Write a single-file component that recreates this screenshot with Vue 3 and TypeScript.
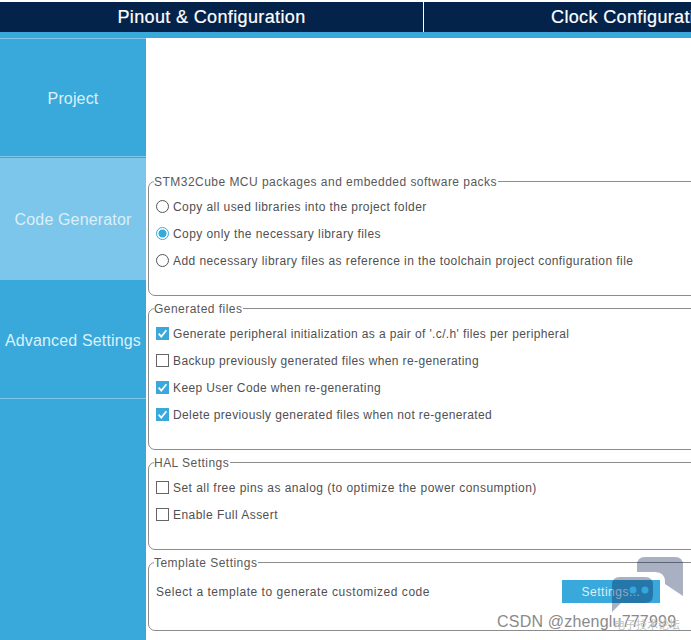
<script setup lang="ts">
interface Row { label: string; kind: 'radio' | 'check'; on: boolean }
const packs: Row[] = [
  { label: 'Copy all used libraries into the project folder', kind: 'radio', on: false },
  { label: 'Copy only the necessary library files', kind: 'radio', on: true },
  { label: 'Add necessary library files as reference in the toolchain project configuration file', kind: 'radio', on: false },
]
const generated: Row[] = [
  { label: "Generate peripheral initialization as a pair of '.c/.h' files per peripheral", kind: 'check', on: true },
  { label: 'Backup previously generated files when re-generating', kind: 'check', on: false },
  { label: 'Keep User Code when re-generating', kind: 'check', on: true },
  { label: 'Delete previously generated files when not re-generated', kind: 'check', on: true },
]
const hal: Row[] = [
  { label: 'Set all free pins as analog (to optimize the power consumption)', kind: 'check', on: false },
  { label: 'Enable Full Assert', kind: 'check', on: false },
]
const groups = [
  { title: 'STM32Cube MCU packages and embedded software packs', rows: packs, cls: 'g-packs' },
  { title: 'Generated files', rows: generated, cls: 'g-gen' },
  { title: 'HAL Settings', rows: hal, cls: 'g-hal' },
]
</script>

<template>
  <div class="page">
    <header class="tabs">
      <div class="tab">Pinout &amp; Configuration</div>
      <div class="tab second">Clock Configuration</div>
    </header>
    <div class="band"></div>
    <div class="main">
      <nav class="side">
        <div class="item project">Project</div>
        <div class="item active">Code Generator</div>
        <div class="item advanced">Advanced Settings</div>
      </nav>
      <section class="content">
        <fieldset v-for="g in groups" :key="g.title" class="group" :class="g.cls">
          <legend>{{ g.title }}</legend>
          <label v-for="r in g.rows" :key="r.label" class="row">
            <span v-if="r.kind === 'radio'" class="radio" :class="{ on: r.on }"></span>
            <span v-else class="check" :class="{ on: r.on }">
              <svg v-if="r.on" viewBox="0 0 13 13" width="13" height="13">
                <path d="M2.6 6.6 5.3 9.6 10.4 3.2" fill="none" stroke="#fff" stroke-width="1.7" />
              </svg>
            </span>
            <span>{{ r.label }}</span>
          </label>
        </fieldset>
        <fieldset class="group g-tpl">
          <legend>Template Settings</legend>
          <div class="tpl-row">
            <span>Select a template to generate customized code</span>
            <button class="settings" type="button">Settings...</button>
          </div>
        </fieldset>
      </section>
    </div>

    <div class="mark">CSDN @zhenglu777999</div>
    <div class="mark-cn">电子技术论坛</div>
    <svg class="bubbles" viewBox="0 0 72 56" width="72" height="56">
      <path d="M33 0H63Q71 0 71 8V39L53 27V25Q53 15 43 15H25V8Q25 0 33 0Z" fill="#00184a" fill-opacity=".34" />
      <path d="M8 20H33Q41 20 41 28V38Q41 46 33 46H9L0 55V28Q0 20 8 20Z" fill="#00184a" fill-opacity=".34" />
      <circle cx="21" cy="33" r="3.5" fill="#36a6de" />
      <circle cx="33" cy="33" r="3.5" fill="#36a6de" />
    </svg>
  </div>
</template>

<style>
html, body { margin: 0; background: #fff; }
</style>

<style scoped>
.page {
  position: relative;
  width: 691px;
  height: 640px;
  overflow: hidden;
  background: #fff;
  padding-top: 2px;
  box-sizing: border-box;
  font-family: "Liberation Sans", Arial, sans-serif;
  color: #505052;
}
.tabs {
  display: flex;
  height: 30px;
  width: 842px;
  background: #03234b;
}
.tab {
  flex: 0 0 424px;
  box-sizing: border-box;
  color: #fff;
  font-size: 18px;
  line-height: 30px;
  text-align: center;
  letter-spacing: 0.36px;
  -webkit-text-stroke: 0.2px #fff;
}
.tab:first-child { border-right: 1px solid #fff; }
.tab.second { flex-basis: 418px; }
.band { height: 6px; background: #39a9dc; }
.main { display: flex; height: 602px; }
.side {
  flex: 0 0 146px;
  background: #39a9dc;
  display: flex;
  flex-direction: column;
  color: #dcf0f9;
  font-size: 16px;
  letter-spacing: 0.15px;
}
.item {
  display: flex;
  align-items: center;
  justify-content: center;
  white-space: nowrap;
  box-sizing: border-box;
  padding-top: 2px;
}
.project { height: 119px; border-top: 1px solid #7cc7ea; border-bottom: 1px solid #7cc7ea; }
.active { height: 122px; margin-top: 1px; background: #7bc6ea; }
.advanced { height: 119px; padding-top: 3px; border-bottom: 1px solid #7cc7ea; }
.content {
  flex: 1;
  min-width: 0;
  padding: 136px 0 0 2px;
}
.group {
  width: 600px;
  margin: 0;
  padding: 0 0 0 6px;
  border: 1px solid #8c8c8c;
  border-radius: 7px;
  box-sizing: border-box;
  font-size: 12px;
  letter-spacing: 0.43px;
}
.group legend {
  height: 14px;
  padding: 0 1px 0 0;
  margin-left: -1px;
  line-height: 16px;
  color: #58585a;
  letter-spacing: 0.47px;
}
.g-packs { height: 122px; padding-top: 5px; }
.g-gen { height: 149px; margin-top: 5px; padding-top: 5px; letter-spacing: 0.38px; }
.g-hal { height: 95px; margin-top: 5px; padding-top: 5px; letter-spacing: 0.46px; }
.g-tpl { height: 76px; margin-top: 5px; padding: 11px 0 0 7px; letter-spacing: 0.53px; }
.g-tpl legend { margin-left: -2px; }
.row {
  display: flex;
  align-items: center;
  gap: 4px;
  height: 27px;
  white-space: nowrap;
}
.radio {
  box-sizing: border-box;
  width: 13px;
  height: 13px;
  margin-left: 1px;
  border: 1px solid #555;
  border-radius: 50%;
  background: #fff;
}
.radio.on {
  border-color: #39a9dc;
  background: radial-gradient(circle, #39a9dc 0 3.6px, #fff 4.4px);
}
.check {
  box-sizing: border-box;
  width: 13px;
  height: 13px;
  margin-left: 1px;
  border: 1px solid #666;
  background: #fff;
  position: relative;
}
.check svg { position: absolute; left: -1px; top: -1px; display: block; }
.check.on { border-color: #39a9dc; background: #39a9dc; }
.tpl-row {
  display: flex;
  align-items: center;
  justify-content: space-between;
  height: 23px;
  width: 504px;
  white-space: nowrap;
}
.settings {
  width: 98px;
  height: 23px;
  border: 0;
  padding: 0;
  background: #39a9dc;
  color: #dcf0f9;
  font: inherit;
  letter-spacing: 0.5px;
}
.bubbles { position: absolute; left: 612px; top: 557px; }
.mark {
  position: absolute;
  left: 497px;
  top: 613px;
  font-size: 16px;
  letter-spacing: 0.2px;
  color: #8a8a8a;
  white-space: nowrap;
}
.mark-cn {
  position: absolute;
  left: 614px;
  top: 617px;
  font-family: "Noto Sans CJK SC", sans-serif;
  font-size: 11px;
  line-height: 14px;
  color: #c2c2c2;
  white-space: nowrap;
}
</style>
